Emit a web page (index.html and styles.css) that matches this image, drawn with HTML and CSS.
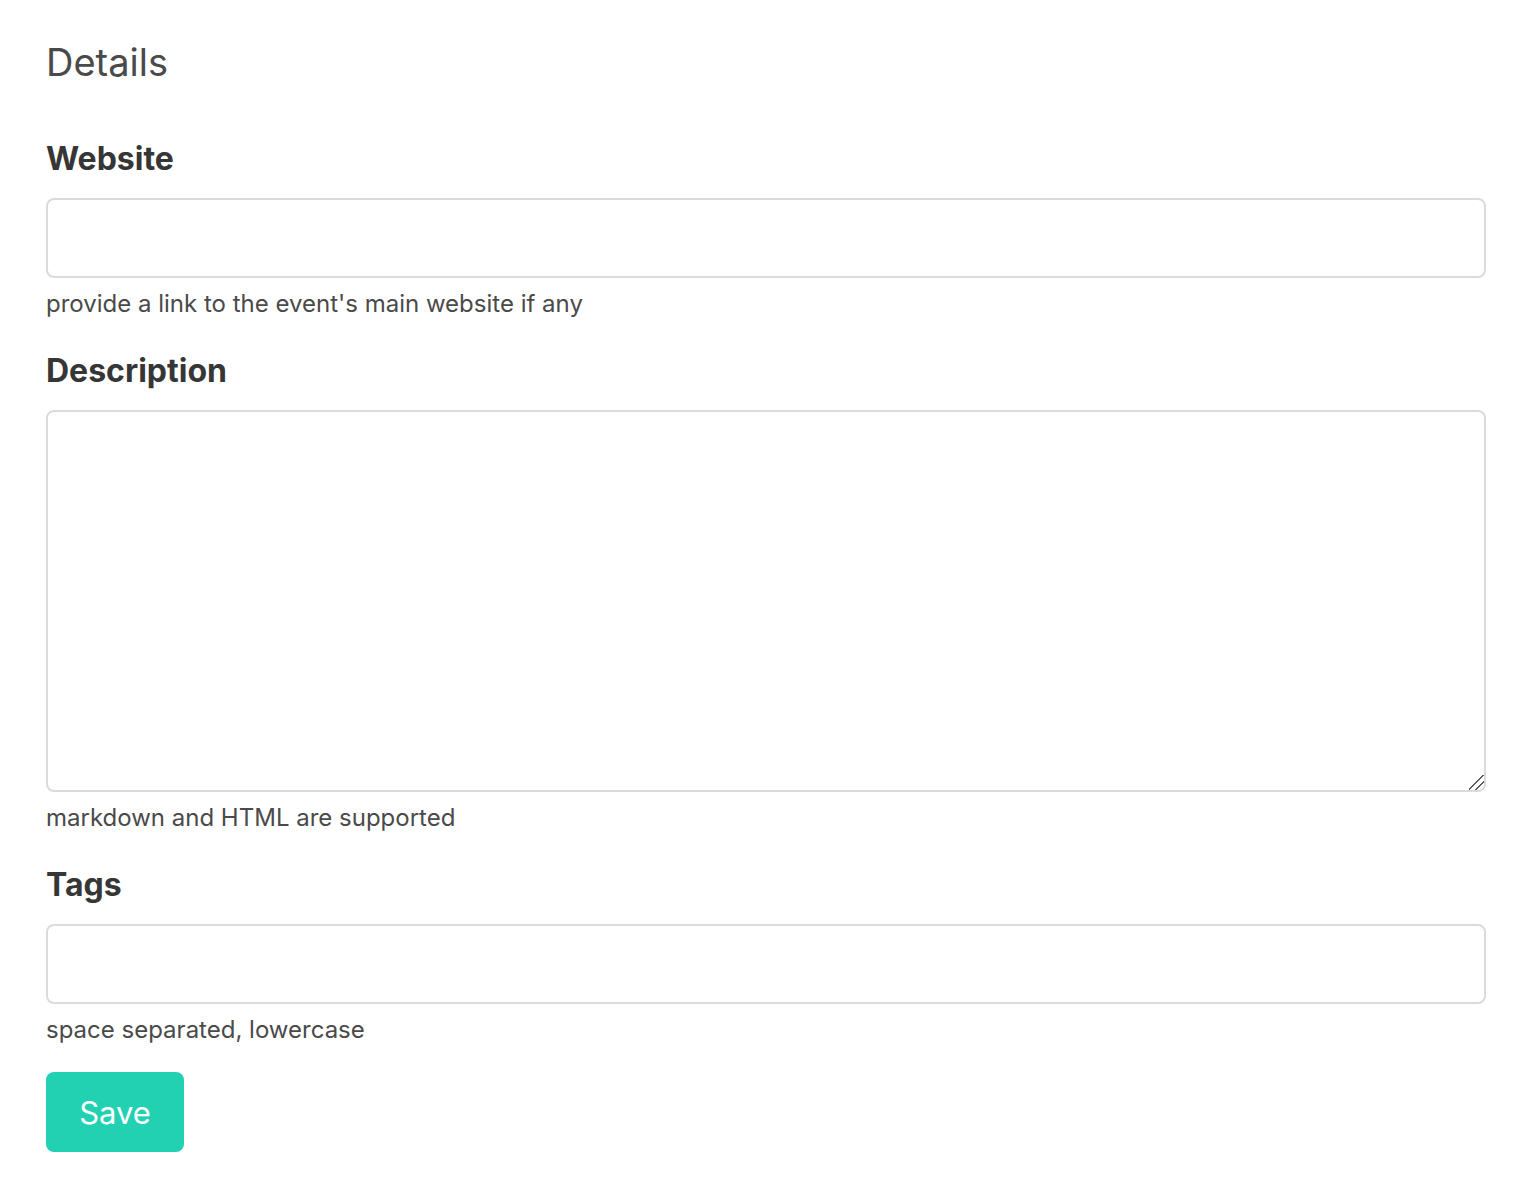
FILE: index.html
```html
<!DOCTYPE html>
<html lang="en">
<head>
<meta charset="utf-8">
<title>Details</title>
<link rel="stylesheet" href="styles.css">
</head>
<body>
<main class="page">
  <h1 class="title">Details</h1>
  <form class="form">
    <div class="field">
      <label class="label" for="website">Website</label>
      <input class="input" id="website" type="text">
      <p class="help">provide a link to the event's main website if any</p>
    </div>
    <div class="field">
      <label class="label" for="description">Description</label>
      <textarea class="textarea" id="description"></textarea>
      <p class="help">markdown and HTML are supported</p>
    </div>
    <div class="field">
      <label class="label" for="tags">Tags</label>
      <input class="input" id="tags" type="text">
      <p class="help">space separated, lowercase</p>
    </div>
    <button class="button" type="button">Save</button>
  </form>
</main>
</body>
</html>
```
FILE: styles.css
```css
html, body {
  margin: 0;
  padding: 0;
  background: #fff;
}
body {
  font-family: Inter, "Noto Sans", sans-serif;
  color: #4a4a4a;
}
.page {
  padding: 38px 48px 40px 46px;
}
.title {
  margin: 0;
  font-size: 38px;
  line-height: 48px;
  font-weight: 400;
  color: #4a4a4a;
}
.form {
  display: flex;
  flex-direction: column;
  align-items: flex-start;
}
.field {
  display: flex;
  flex-direction: column;
  align-self: stretch;
  margin-top: 33px;
}
.field:first-child {
  margin-top: 55px;
}
.label {
  font-size: 32px;
  line-height: 36px;
  font-weight: 700;
  color: #363636;
}
.input, .textarea {
  box-sizing: border-box;
  width: 100%;
  margin: 21px 0 0;
  border: 2px solid #dbdbdb;
  border-radius: 8px;
  background: #fff;
  font: inherit;
  font-size: 30px;
  padding: 0 20px;
  outline: none;
}
.input {
  height: 80px;
}
.textarea {
  height: 382px;
  resize: vertical;
  display: block;
}
.textarea::-webkit-scrollbar {
  width: 18px;
  height: 18px;
}
.textarea::-webkit-resizer {
  background: linear-gradient(135deg,
    transparent 0 46.5%, #5a5a5a 46.5% 53%, transparent 53% 69%,
    #5a5a5a 69% 75.5%, transparent 75.5%);
}
.help {
  margin: 10px 0 0;
  font-size: 24px;
  line-height: 32px;
  color: #4a4a4a;
}
.button {
  margin-top: 26px;
  width: 138px;
  height: 80px;
  border: none;
  border-radius: 8px;
  background: #22d1b2;
  color: #fff;
  font: inherit;
  font-size: 31px;
  cursor: pointer;
}
```
